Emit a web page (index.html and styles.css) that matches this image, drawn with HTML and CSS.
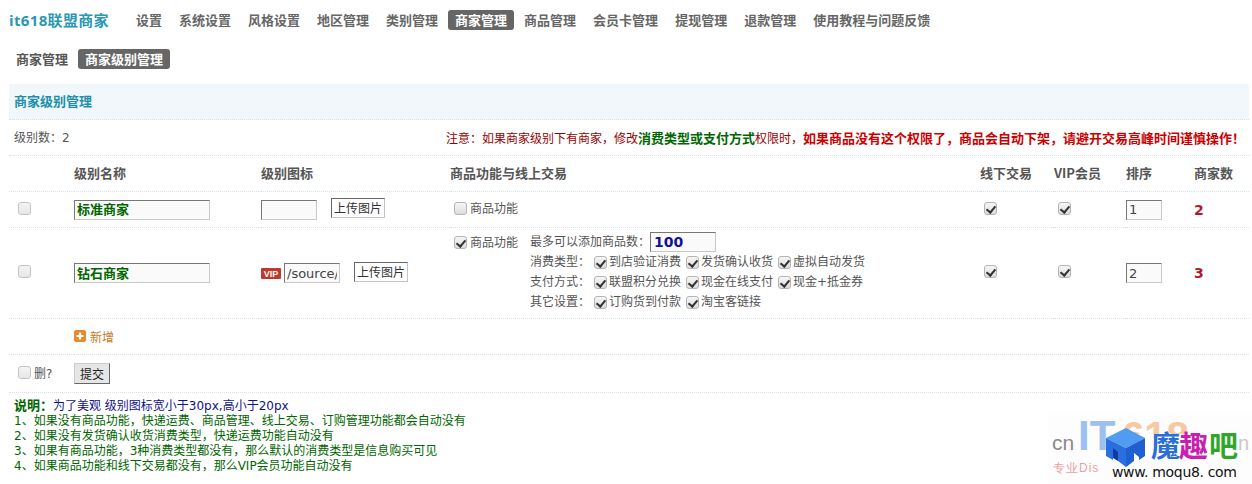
FILE: index.html
```html
<!DOCTYPE html>
<html lang="zh">
<head>
<meta charset="utf-8">
<title>商家级别管理</title>
<link rel="stylesheet" href="styles.css">
</head>
<body>
<div class="page">
  <header class="nav">
    <div class="logo">it618联盟商家</div>
    <a class="tab">设置</a><a class="tab">系统设置</a><a class="tab">风格设置</a><a class="tab">地区管理</a><a class="tab">类别管理</a><a class="tab active">商家管理</a><a class="tab">商品管理</a><a class="tab">会员卡管理</a><a class="tab">提现管理</a><a class="tab">退款管理</a><a class="tab">使用教程与问题反馈</a>
  </header>
  <nav class="subnav">
    <a class="tab dark">商家管理</a><a class="tab active">商家级别管理</a>
  </nav>
  <h2 class="band">商家级别管理</h2>
  <div class="count-row">
    <span>级别数：2</span>
    <span class="notice">注意：如果商家级别下有商家，修改<b class="ok">消费类型或支付方式</b>权限时，<b>如果商品没有这个权限了，商品会自动下架，请避开交易高峰时间谨慎操作！</b></span>
  </div>
  <table class="grid">
    <colgroup>
      <col class="c-check"><col class="c-name"><col class="c-icon"><col class="c-func"><col class="c-off"><col class="c-vip"><col class="c-sort"><col>
    </colgroup>
    <thead>
      <tr class="r-36"><th></th><th>级别名称</th><th>级别图标</th><th>商品功能与线上交易</th><th>线下交易</th><th>VIP会员</th><th>排序</th><th>商家数</th></tr>
    </thead>
    <tbody>
      <tr class="r-36">
        <td><input type="checkbox" class="cb first"></td>
        <td><input class="field name" value="标准商家"></td>
        <td><div class="icon-cell up"><input class="field path"><button class="upload">上传图片</button></div></td>
        <td><label class="func"><input type="checkbox" class="cb"><span>商品功能</span></label></td>
        <td><input type="checkbox" class="cb" checked></td>
        <td><input type="checkbox" class="cb" checked></td>
        <td><input class="field sort" value="1"></td>
        <td class="num">2</td>
      </tr>
      <tr>
        <td><input type="checkbox" class="cb first"></td>
        <td><input class="field name" value="钻石商家"></td>
        <td><div class="icon-cell">
          <svg class="vip" width="20" height="11" viewBox="0 0 20 11"><rect width="20" height="11" rx="1" fill="#c0392b"/><text x="10" y="9" text-anchor="middle" font-family="Liberation Sans" font-weight="700" font-size="9" fill="#fff">VIP</text></svg>
          <input class="field path" value="/source/"><button class="upload">上传图片</button></div></td>
        <td class="func-cell">
          <div class="func-wrap">
            <label class="func"><input type="checkbox" class="cb" checked><span>商品功能</span></label>
            <div class="opts">
              <div class="line">最多可以添加商品数：<input class="field max" value="100"></div>
              <div class="line">消费类型：<label class="opt"><input type="checkbox" class="cb" checked>到店验证消费</label><label class="opt"><input type="checkbox" class="cb" checked>发货确认收货</label><label class="opt"><input type="checkbox" class="cb" checked>虚拟自动发货</label></div>
              <div class="line">支付方式：<label class="opt"><input type="checkbox" class="cb" checked>联盟积分兑换</label><label class="opt"><input type="checkbox" class="cb" checked>现金在线支付</label><label class="opt"><input type="checkbox" class="cb" checked>现金+抵金券</label></div>
              <div class="line">其它设置：<label class="opt"><input type="checkbox" class="cb" checked>订购货到付款</label><label class="opt"><input type="checkbox" class="cb" checked>淘宝客链接</label></div>
            </div>
          </div>
        </td>
        <td><input type="checkbox" class="cb" checked></td>
        <td><input type="checkbox" class="cb" checked></td>
        <td><input class="field sort" value="2"></td>
        <td class="num">3</td>
      </tr>
      <tr class="r-36">
        <td></td>
        <td colspan="7"><a class="add"><svg width="12" height="12" viewBox="0 0 12 12"><rect width="12" height="12" rx="2" fill="#e8892b"/><path d="M6 2.5v7M2.5 6h7" stroke="#fff" stroke-width="2.2"/></svg>新增</a></td>
      </tr>
      <tr class="r-38">
        <td colspan="8"><div class="submit-row"><label class="del"><input type="checkbox" class="cb first">删?</label><button class="submit">提交</button></div></td>
      </tr>
    </tbody>
  </table>
  <div class="notes">
    <div><b>说明：</b><span class="navy">为了美观 级别图标宽小于30px,高小于20px</span></div>
    <div>1、如果没有商品功能，快递运费、商品管理、线上交易、订购管理功能都会自动没有</div>
    <div>2、如果没有发货确认收货消费类型，快递运费功能自动没有</div>
    <div>3、如果有商品功能，3种消费类型都没有，那么默认的消费类型是信息购买可见</div>
    <div>4、如果商品功能和线下交易都没有，那么VIP会员功能自动没有</div>
  </div>
</div>
<svg class="mark" width="204" height="72" viewBox="0 0 204 72">
  <rect width="204" height="72" fill="#fdfdfd"/>
  <text x="4" y="38" font-family="Liberation Sans" font-size="21" fill="#8a8a8a">cn</text>
  <text x="30" y="38" font-family="Liberation Sans" font-size="42" font-weight="700" fill="#9dc0f2">IT</text>
  <text x="74" y="38" font-family="Liberation Sans" font-size="40" font-weight="700" fill="#f6c9a0">618</text>
  <rect x="66" y="22" width="130" height="26" fill="#fff"/>
  <text x="5" y="60" font-family="Liberation Sans" font-size="12" fill="#e8a0a0" letter-spacing="1">专业Dis</text>
  <text x="190" y="38" font-family="Liberation Sans" font-size="20" fill="#c8c8c8">n</text>
  <path d="M78 16 97 26 78 36 58 26Z" fill="#4f9cf0"/>
  <path d="M58 26 78 36V55L70 49V41L65 45V48L58 44Z" fill="#2a6fe0"/>
  <path d="M97 26 78 36V55L86 49V41L91 45V48L97 44Z" fill="#1f5fd0"/>
  <path d="M65 36 70 40V49L65 46Z" fill="#123a9c"/>
  <text x="103" y="45" font-family="Noto Sans CJK SC" font-weight="700" font-size="29" fill="#2a6fd8">魔</text>
  <text x="131" y="45" font-family="Noto Sans CJK SC" font-weight="700" font-size="29" fill="#c91fb0">趣</text>
  <text x="161" y="45" font-family="Noto Sans CJK SC" font-weight="700" font-size="29" fill="#2fa52a">吧</text>
  <text x="64" y="65" font-family="DejaVu Sans" font-size="14" fill="#111" textLength="125">www. moqu8. com</text>
</svg>
</body>
</html>
```
FILE: styles.css
```css
* { box-sizing: border-box; }
html, body { margin: 0; height: 100%; overflow: hidden; background: #fff; }
body {
  font-family: "DejaVu Sans", "Noto Sans CJK SC", sans-serif;
  font-size: 12px;
  color: #555;
  position: relative;
}
.page { padding: 0 3px 0 9px; }
.nav { display: flex; gap: 3px; padding-top: 10px; }
.logo { width: 117px; font: 700 15px/20px "Open Sans", "Noto Sans CJK SC", sans-serif; color: #2a97b5; letter-spacing: .35px; white-space: nowrap; }
.tab {
  display: block;
  height: 20px;
  padding: 0 7px;
  border-radius: 3px;
  font: 700 13px/20px "Noto Sans CJK SC", sans-serif;
  color: #666;
  white-space: nowrap;
}
.tab.dark { color: #555; }
.tab.active { background: #666; color: #fff; }
.subnav { display: flex; gap: 3px; margin-top: 19px; }
.band {
  margin: 15px 0 0;
  height: 36px;
  padding-left: 5px;
  background: #f2f7fc;
  border-bottom: 1px dotted #d4dfe6;
  font: 700 13px/34px "Noto Sans CJK SC", sans-serif;
  color: #1c8fa9;
}
.count-row {
  display: flex;
  justify-content: space-between;
  align-items: center;
  height: 36px;
  padding: 0 4px 0 5px;
  border-bottom: 1px dotted #d4dfe6;
  line-height: 18px;
}
.notice { color: #900; font-family: "Noto Sans CJK SC", sans-serif; }
.notice b { font-size: 13px; color: #c00; }
.notice b.ok { color: #060; }
.grid { width: 1240px; border-collapse: separate; border-spacing: 0; table-layout: fixed; }
.c-check { width: 65px; }
.c-name { width: 187px; }
.c-icon { width: 189px; }
.c-func { width: 530px; }
.c-off { width: 74px; }
.c-vip { width: 72px; }
.c-sort { width: 68px; }
.grid th, .grid td {
  padding: 0;
  border-bottom: 1px dotted #d4e2ea;
  vertical-align: middle;
  text-align: left;
}
.grid th { padding-bottom: 2px; font: 700 13px/18px "Noto Sans CJK SC", "DejaVu Sans", sans-serif; color: #555; }
.r-36 { height: 36px; }
.r-38 { height: 38px; }
.cb {
  appearance: none;
  -webkit-appearance: none;
  display: inline-block;
  position: relative;
  width: 13px;
  height: 13px;
  margin: 0 3px 0 4px;
  border: 1px solid #b4b4b4;
  border-radius: 3px;
  background: linear-gradient(#f6f6f6, #dcdcdc);
  vertical-align: middle;
  flex: none;
}
td > .cb { display: block; margin-bottom: 3px; }
.cb.first { margin-left: 9px; background: linear-gradient(#f4f4f4, #e6e6e6); border-color: #c4c4c4; }
.cb:checked::after {
  content: "";
  position: absolute;
  left: 3px;
  top: 1px;
  width: 4px;
  height: 7px;
  border: solid #333;
  border-width: 0 2px 2px 0;
  transform: rotate(40deg);
}
.field {
  height: 20px;
  padding: 0 2px;
  border: 1px solid #c8c8c8;
  border-top-color: #777;
  border-left-color: #777;
  background: #fafafa;
  font: 13px "DejaVu Sans", "Noto Sans CJK SC", sans-serif;
  color: #444;
  outline: none;
}
td > .field { display: block; }
.name { width: 136px; padding-bottom: 2px; font: 700 13px "Noto Sans CJK SC", sans-serif; color: #060; }
.path { width: 56px; }
.sort { width: 36px; }
.max { width: 66px; font: 700 14px "DejaVu Sans", sans-serif; color: #119; padding-left: 3px; }
.icon-cell { display: flex; align-items: center; }
.icon-cell.up { align-items: flex-start; }
.icon-cell.up .path { margin-top: 1px; }
.icon-cell.up .upload { margin-top: -1px; }
.vip { margin-right: 3px; flex: none; }
.upload {
  width: 54px;
  height: 20px;
  margin-left: 14px;
  padding: 0;
  border: 1px solid #c4c4c4;
  border-top-color: #666;
  border-left-color: #666;
  background: #fff;
  font: 12px/18px "Noto Sans CJK SC", sans-serif;
  color: #333;
}
.icon-cell:not(.up) .upload { margin-top: -3px; }
.func { display: flex; align-items: center; width: 68px; height: 20px; line-height: 20px; flex: none; font-family: "Noto Sans CJK SC", sans-serif; }
td > .func { margin-bottom: 3px; }
.grid .func-cell { padding: 4px 0 6px; }
.func-wrap { display: flex; gap: 12px; }
.opts { line-height: 20px; font-family: "DejaVu Sans", "Noto Sans CJK SC", sans-serif; }
.line { height: 20px; display: flex; align-items: center; white-space: nowrap; }
.opt { display: inline-flex; align-items: center; margin-right: 1px; }
.opt .cb { margin: 0 2px 0 4px; }
.num { font: 700 14px "DejaVu Sans", sans-serif; color: #b2182b; }
.add { display: inline-flex; align-items: center; gap: 4px; color: #c87a28; }
.submit-row { display: flex; align-items: center; }
.del { display: flex; align-items: center; width: 65px; margin-bottom: 2px; }
.del .cb { margin-bottom: 0; }
.submit {
  width: 36px;
  height: 21px;
  padding: 0;
  border: 1px solid #ccc;
  border-right-color: #666;
  border-bottom-color: #666;
  background: #e6e6e6;
  font: 12px/18px "Noto Sans CJK SC", sans-serif;
  color: #222;
}
.notes { padding: 5px 0 0 5px; line-height: 15px; color: #060; font-family: "DejaVu Sans", "Noto Sans CJK SC", sans-serif; }
.notes b { font-size: 13px; }
.navy { color: #118; }
.mark { position: absolute; left: 1048px; top: 412px; }
```
